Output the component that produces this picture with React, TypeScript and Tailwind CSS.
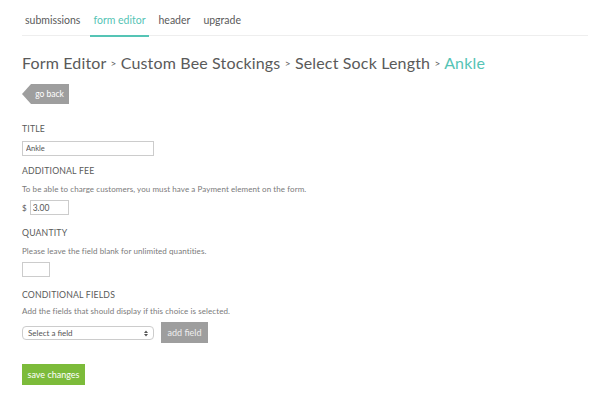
import React from 'react'

const navItems = ['submissions', 'form editor', 'header', 'upgrade']

const Label: React.FC<{ children: React.ReactNode; className?: string }> = ({ children, className }) => (
  <div className={`text-[8.7px] leading-[12px] tracking-[0.02em] text-[#5a5a5a] ${className ?? ''}`}>{children}</div>
)

const Help: React.FC<{ children: React.ReactNode; className?: string }> = ({ children, className }) => (
  <div className={`text-[8px] leading-[10px] tracking-[0.01em] text-[#7a7a7a] ${className ?? ''}`}>{children}</div>
)

export default function App() {
  return (
    <div className="w-[600px] h-[403px] bg-white font-['Lato',sans-serif] text-[#5a5a5a] overflow-hidden">
      {/* tabs */}
      <div className="ml-[22px] w-[566px] h-[36px] border-b border-[#eee] relative flex">
        {navItems.map((item) => (
          <div
            key={item}
            className={`relative px-[3px] mr-[7px] pt-[13px] text-[10.5px] leading-[14px] ${
              item === 'form editor' ? 'text-[#55c4b5]' : 'text-[#5a5a5a]'
            }`}
          >
            {item}
            {item === 'form editor' && (
              <span className="absolute left-0 right-0 bottom-[-2px] h-[2px] bg-[#55c4b5]" />
            )}
          </div>
        ))}
      </div>

      <div className="pl-[22px]">
        <h1 className="mt-[17px] h-[20px] text-[16px] leading-[20px] text-[#5a5a5a] tracking-[0.01em]">
          Form Editor <span className="text-[10px] align-[2px]">&gt;</span> Custom Bee Stockings{' '}
          <span className="text-[10px] align-[2px]">&gt;</span> Select Sock Length{' '}
          <span className="text-[10px] align-[2px]">&gt;</span>{' '}
          <span className="text-[#55c4b5]">Ankle</span>
        </h1>

        <button className="mt-[11px] block w-[47px] h-[20px] bg-[#9e9e9e] text-white text-[8.5px] leading-[20px] pl-[8px] [clip-path:polygon(9px_0,100%_0,100%_100%,9px_100%,0_50%)]">
          go back
        </button>

        <Label className="mt-[19px]">TITLE</Label>
        <input
          defaultValue="Ankle"
          className="mt-[6px] block w-[132px] h-[15px] border border-[#ccc] px-[3px] text-[7.5px] text-[#555] outline-none"
        />

        <Label className="mt-[9px]">ADDITIONAL FEE</Label>
        <Help className="mt-[7px]">To be able to charge customers, you must have a Payment element on the form.</Help>
        <div className="mt-[6px] flex items-center h-[15px]">
          <span className="text-[8px] mr-[3px]">$</span>
          <input
            defaultValue="3.00"
            className="w-[39px] h-[15px] border border-[#ccc] px-[2px] text-[8.5px] text-[#555] outline-none"
          />
        </div>

        <Label className="mt-[12px]">QUANTITY</Label>
        <Help className="mt-[7px]">Please leave the field blank for unlimited quantities.</Help>
        <input className="mt-[6px] block w-[28px] h-[15px] border border-[#ccc] outline-none" />

        <Label className="mt-[12px]">CONDITIONAL FIELDS</Label>
        <Help className="mt-[5px]">Add the fields that should display if this choice is selected.</Help>
        <div className="mt-[6px] flex items-center h-[21px]">
          <div className="relative w-[132px] h-[14px] border border-[#ccc] rounded-[4px] flex items-center pl-[5px] text-[8px] text-[#555]">
            Select a field
            <svg className="absolute right-[5px] top-[3px]" width="4" height="7" viewBox="0 0 4 7">
              <path d="M0 3 L2 0.5 L4 3 Z M0 4 L2 6.5 L4 4 Z" fill="#555" />
            </svg>
          </div>
          <button className="ml-[7px] w-[47px] h-[21px] bg-[#9e9e9e] text-[#eee] text-[9px]">add field</button>
        </div>

        <button className="mt-[21px] block w-[63px] h-[21px] bg-[#7cbb3a] text-white text-[9px]">save changes</button>
      </div>
    </div>
  )
}
